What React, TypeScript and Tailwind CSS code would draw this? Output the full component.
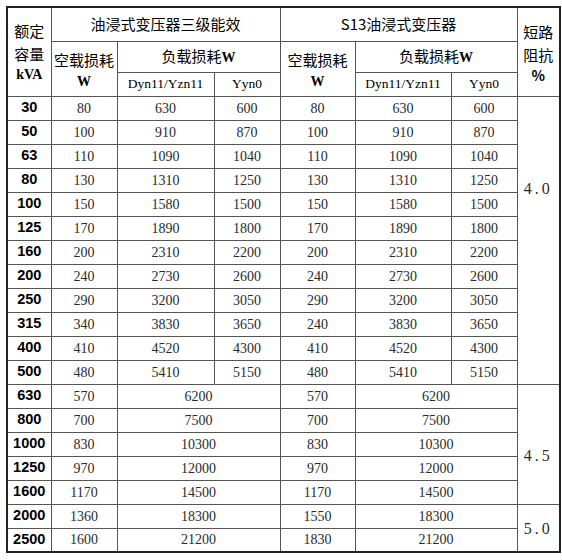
const cjk = "font-['Noto_Sans_CJK_SC',sans-serif]";
const num = "font-['Liberation_Serif',serif]";

type Row = {
  kva: string;
  e1: string;
  d1: string;
  y1?: string;
  e2: string;
  d2: string;
  y2?: string;
};

const rows: Row[] = [
  { kva: "30", e1: "80", d1: "630", y1: "600", e2: "80", d2: "630", y2: "600" },
  { kva: "50", e1: "100", d1: "910", y1: "870", e2: "100", d2: "910", y2: "870" },
  { kva: "63", e1: "110", d1: "1090", y1: "1040", e2: "110", d2: "1090", y2: "1040" },
  { kva: "80", e1: "130", d1: "1310", y1: "1250", e2: "130", d2: "1310", y2: "1250" },
  { kva: "100", e1: "150", d1: "1580", y1: "1500", e2: "150", d2: "1580", y2: "1500" },
  { kva: "125", e1: "170", d1: "1890", y1: "1800", e2: "170", d2: "1890", y2: "1800" },
  { kva: "160", e1: "200", d1: "2310", y1: "2200", e2: "200", d2: "2310", y2: "2200" },
  { kva: "200", e1: "240", d1: "2730", y1: "2600", e2: "240", d2: "2730", y2: "2600" },
  { kva: "250", e1: "290", d1: "3200", y1: "3050", e2: "290", d2: "3200", y2: "3050" },
  { kva: "315", e1: "340", d1: "3830", y1: "3650", e2: "240", d2: "3830", y2: "3650" },
  { kva: "400", e1: "410", d1: "4520", y1: "4300", e2: "410", d2: "4520", y2: "4300" },
  { kva: "500", e1: "480", d1: "5410", y1: "5150", e2: "480", d2: "5410", y2: "5150" },
  { kva: "630", e1: "570", d1: "6200", e2: "570", d2: "6200" },
  { kva: "800", e1: "700", d1: "7500", e2: "700", d2: "7500" },
  { kva: "1000", e1: "830", d1: "10300", e2: "830", d2: "10300" },
  { kva: "1250", e1: "970", d1: "12000", e2: "970", d2: "12000" },
  { kva: "1600", e1: "1170", d1: "14500", e2: "1170", d2: "14500" },
  { kva: "2000", e1: "1360", d1: "18300", e2: "1550", d2: "18300" },
  { kva: "2500", e1: "1600", d1: "21200", e2: "1830", d2: "21200" },
];

// impedance cells: first row index, span, top padding
const impedance: Record<number, { span: number; value: string; pad: string }> = {
  0: { span: 12, value: "4.0", pad: "pt-[82px]" },
  12: { span: 5, value: "4.5", pad: "pt-[61px]" },
  17: { span: 2, value: "5.0", pad: "pt-[14px]" },
};

const td = "border border-[#555] p-0 text-center h-[24px]";
const th = "border border-[#555] p-0 text-center font-normal text-black";
const zh = `${th} ${cjk} text-[15px]`;
const sub = `${th} ${num} text-[13.5px] text-[#222]`;

export default function App() {
  return (
    <div className="w-[562px] h-[560px] bg-white pt-[6px] pl-[6px]">
      <table className="border-collapse table-fixed w-[553px] border-2 border-[#222]">
        <colgroup>
          <col className="w-[44px]" />
          <col className="w-[66px]" />
          <col className="w-[97px]" />
          <col className="w-[66px]" />
          <col className="w-[75px]" />
          <col className="w-[96px]" />
          <col className="w-[66px]" />
          <col className="w-[43px]" />
        </colgroup>
        <thead>
          <tr className="h-[34px]">
            <th rowSpan={3} className={`${zh} leading-[23px]`}>
              <div>额定</div>
              <div>容量</div>
              <div className="font-['Liberation_Serif',serif] font-bold text-[14px] leading-[20px]">kVA</div>
            </th>
            <th colSpan={3} className={zh}>油浸式变压器三级能效</th>
            <th colSpan={3} className={zh}>S13油浸式变压器</th>
            <th rowSpan={3} className={`${zh} leading-[23px]`}>
              <div>短路</div>
              <div>阻抗</div>
              <div className="text-[14px] font-bold leading-[18px]">%</div>
            </th>
          </tr>
          <tr className="h-[31px]">
            <th rowSpan={2} className={`${zh} leading-[22px] pt-[4px]`}>
              <div>空载损耗</div>
              <div className="font-['Liberation_Serif',serif] font-bold text-[14px]">W</div>
            </th>
            <th colSpan={2} className={zh}>
              负载损耗<span className="font-['Liberation_Serif',serif] font-bold text-[14px]">W</span>
            </th>
            <th rowSpan={2} className={`${zh} leading-[22px] pt-[4px]`}>
              <div>空载损耗</div>
              <div className="font-['Liberation_Serif',serif] font-bold text-[14px]">W</div>
            </th>
            <th colSpan={2} className={zh}>
              负载损耗<span className="font-['Liberation_Serif',serif] font-bold text-[14px]">W</span>
            </th>
          </tr>
          <tr className="h-[24px]">
            <th className={sub}>Dyn11/Yzn11</th>
            <th className={sub}>Yyn0</th>
            <th className={sub}>Dyn11/Yzn11</th>
            <th className={sub}>Yyn0</th>
          </tr>
        </thead>
        <tbody className={`${num} text-[14px] text-[#2a2a2a]`}>
          {rows.map((r, i) => {
            const imp = impedance[i];
            return (
              <tr key={r.kva}>
                <td className={`${td} font-['Liberation_Sans',sans-serif] font-bold text-[14.5px] text-black`}>{r.kva}</td>
                <td className={td}>{r.e1}</td>
                {r.y1 ? (
                  <>
                    <td className={td}>{r.d1}</td>
                    <td className={td}>{r.y1}</td>
                  </>
                ) : (
                  <td colSpan={2} className={td}>{r.d1}</td>
                )}
                <td className={td}>{r.e2}</td>
                {r.y2 ? (
                  <>
                    <td className={td}>{r.d2}</td>
                    <td className={td}>{r.y2}</td>
                  </>
                ) : (
                  <td colSpan={2} className={td}>{r.d2}</td>
                )}
                {imp && (
                  <td
                    rowSpan={imp.span}
                    className={`border border-[#555] p-0 text-center align-top ${imp.pad} text-[16px] leading-[20px] tracking-[3px] text-[#2a2a2a]`}
                  >
                    {imp.value}
                  </td>
                )}
              </tr>
            );
          })}
        </tbody>
      </table>
    </div>
  );
}
